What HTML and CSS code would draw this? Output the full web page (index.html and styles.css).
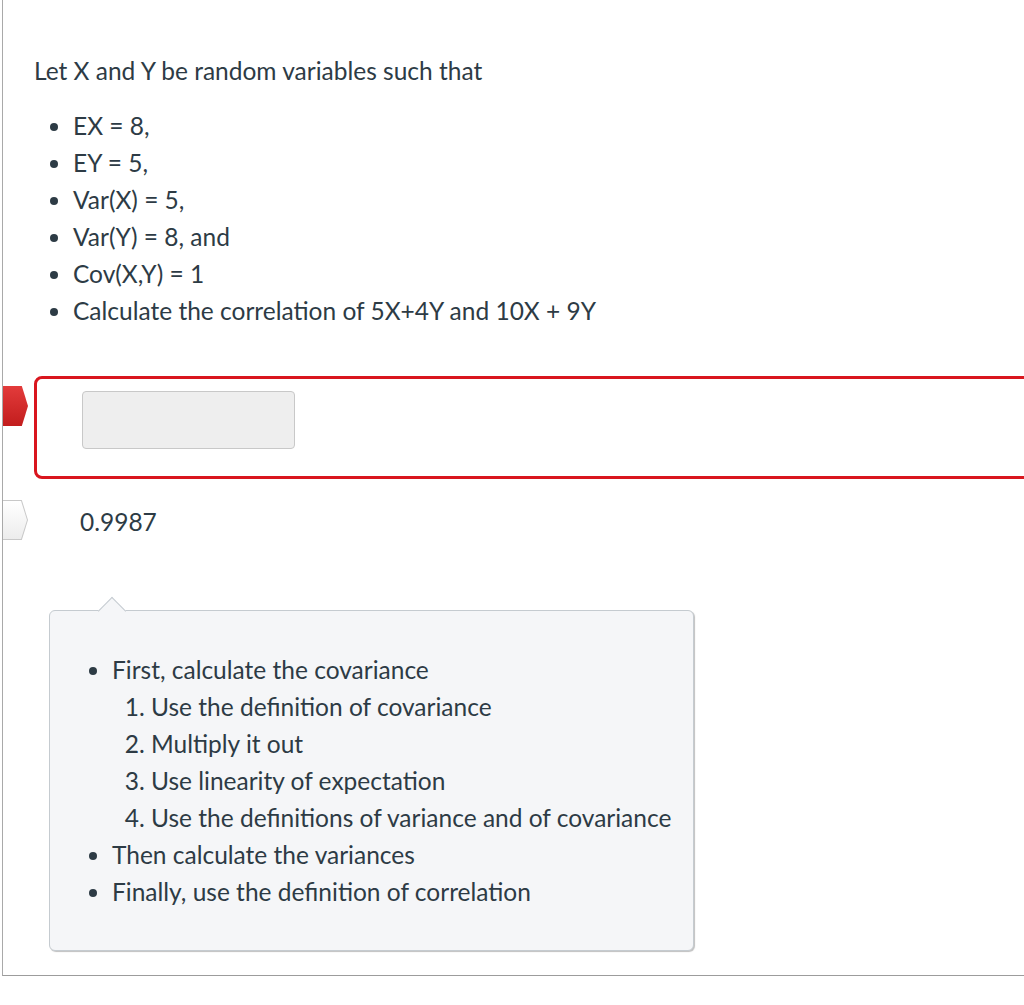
FILE: index.html
```html
<!DOCTYPE html>
<html>
<head>
<meta charset="utf-8">
<link rel="stylesheet" href="styles.css">
</head>
<body>
<div class="question">
  <p class="intro">Let X and Y be random variables such that</p>
  <ul class="facts">
    <li>EX = 8,</li>
    <li>EY = 5,</li>
    <li>Var(X) = 5,</li>
    <li>Var(Y) = 8, and</li>
    <li>Cov(X,Y) = 1</li>
    <li>Calculate the correlation of 5X+4Y and 10X + 9Y</li>
  </ul>
  <div class="answer-row wrong">
    <span class="marker marker-red"></span>
    <div class="answer-box">
      <div class="blank-input"></div>
    </div>
  </div>
  <div class="answer-row correct">
    <span class="marker marker-white"></span>
    <div class="answer-text">0.9987</div>
  </div>
  <div class="hint">
    <span class="hint-arrow"></span>
    <ul class="hint-list">
      <li>First, calculate the covariance
        <ol>
          <li>Use the definition of covariance</li>
          <li>Multiply it out</li>
          <li>Use linearity of expectation</li>
          <li>Use the definitions of variance and of covariance</li>
        </ol>
      </li>
      <li>Then calculate the variances</li>
      <li>Finally, use the definition of correlation</li>
    </ul>
  </div>
</div>
</body>
</html>
```
FILE: styles.css
```css
html, body {
  margin: 0;
  padding: 0;
  background: #ffffff;
  overflow: hidden;
}
body {
  font-family: Lato, "Open Sans", sans-serif;
  font-size: 24.5px;
  line-height: 37px;
  color: #2d3b45;
}
.question {
  margin-left: 2px;
  border-left: 1px solid #a9a9a9;
  border-bottom: 1px solid #9c9c9c;
  box-shadow: 0 1px 0 #dcdcdc;
  padding: 52px 0 24px 31px;
  overflow: hidden;
}
.intro {
  margin: 0 0 18px 0;
}
.facts {
  margin: 0;
  padding-left: 39px;
}
.answer-row {
  position: relative;
}
.wrong {
  margin-top: 47px;
  margin-right: -12px;
}
.answer-box {
  border: 3px solid #d9161e;
  border-radius: 8px;
  padding: 12px 0 27px 45px;
  height: 58px;
}
.blank-input {
  width: 211px;
  height: 56px;
  background: #eeeeee;
  border: 1px solid #c8c8c8;
  border-radius: 4px;
}
.marker {
  position: absolute;
  left: -34px;
  width: 28px;
  height: 40px;
  clip-path: polygon(0 0, 78% 0, 100% 50%, 78% 100%, 0 100%);
}
.marker-red {
  top: 10px;
  background: linear-gradient(#e33b3b, #c21d1d);
}
.marker-white {
  top: 21px;
  background: #c8c8c8;
}
.marker-white::after {
  content: "";
  position: absolute;
  inset: 1px 1px 1px 0;
  clip-path: polygon(0 0, 78% 0, 100% 50%, 78% 100%, 0 100%);
  background: linear-gradient(#ffffff, #ececec);
}
.correct {
  padding: 24px 0 0 46px;
  height: 62px;
}
.hint {
  position: relative;
  margin: 45px 0 0 15px;
  width: 645px;
  background: #f5f6f8;
  border: 1px solid #c5cbd0;
  border-radius: 6px;
  box-shadow: 1px 1px 1px #c0c0c0;
  padding: 40px 0 40px 22px;
  box-sizing: border-box;
}
.hint-arrow {
  position: absolute;
  top: -10px;
  left: 52px;
  width: 19px;
  height: 19px;
  background: #f5f6f8;
  border-left: 1px solid #c5cbd0;
  border-top: 1px solid #c5cbd0;
  transform: rotate(45deg);
}
.hint-list {
  margin: 0;
  padding-left: 40px;
}
.hint-list ol {
  margin: 0;
  padding-left: 39px;
}
```
